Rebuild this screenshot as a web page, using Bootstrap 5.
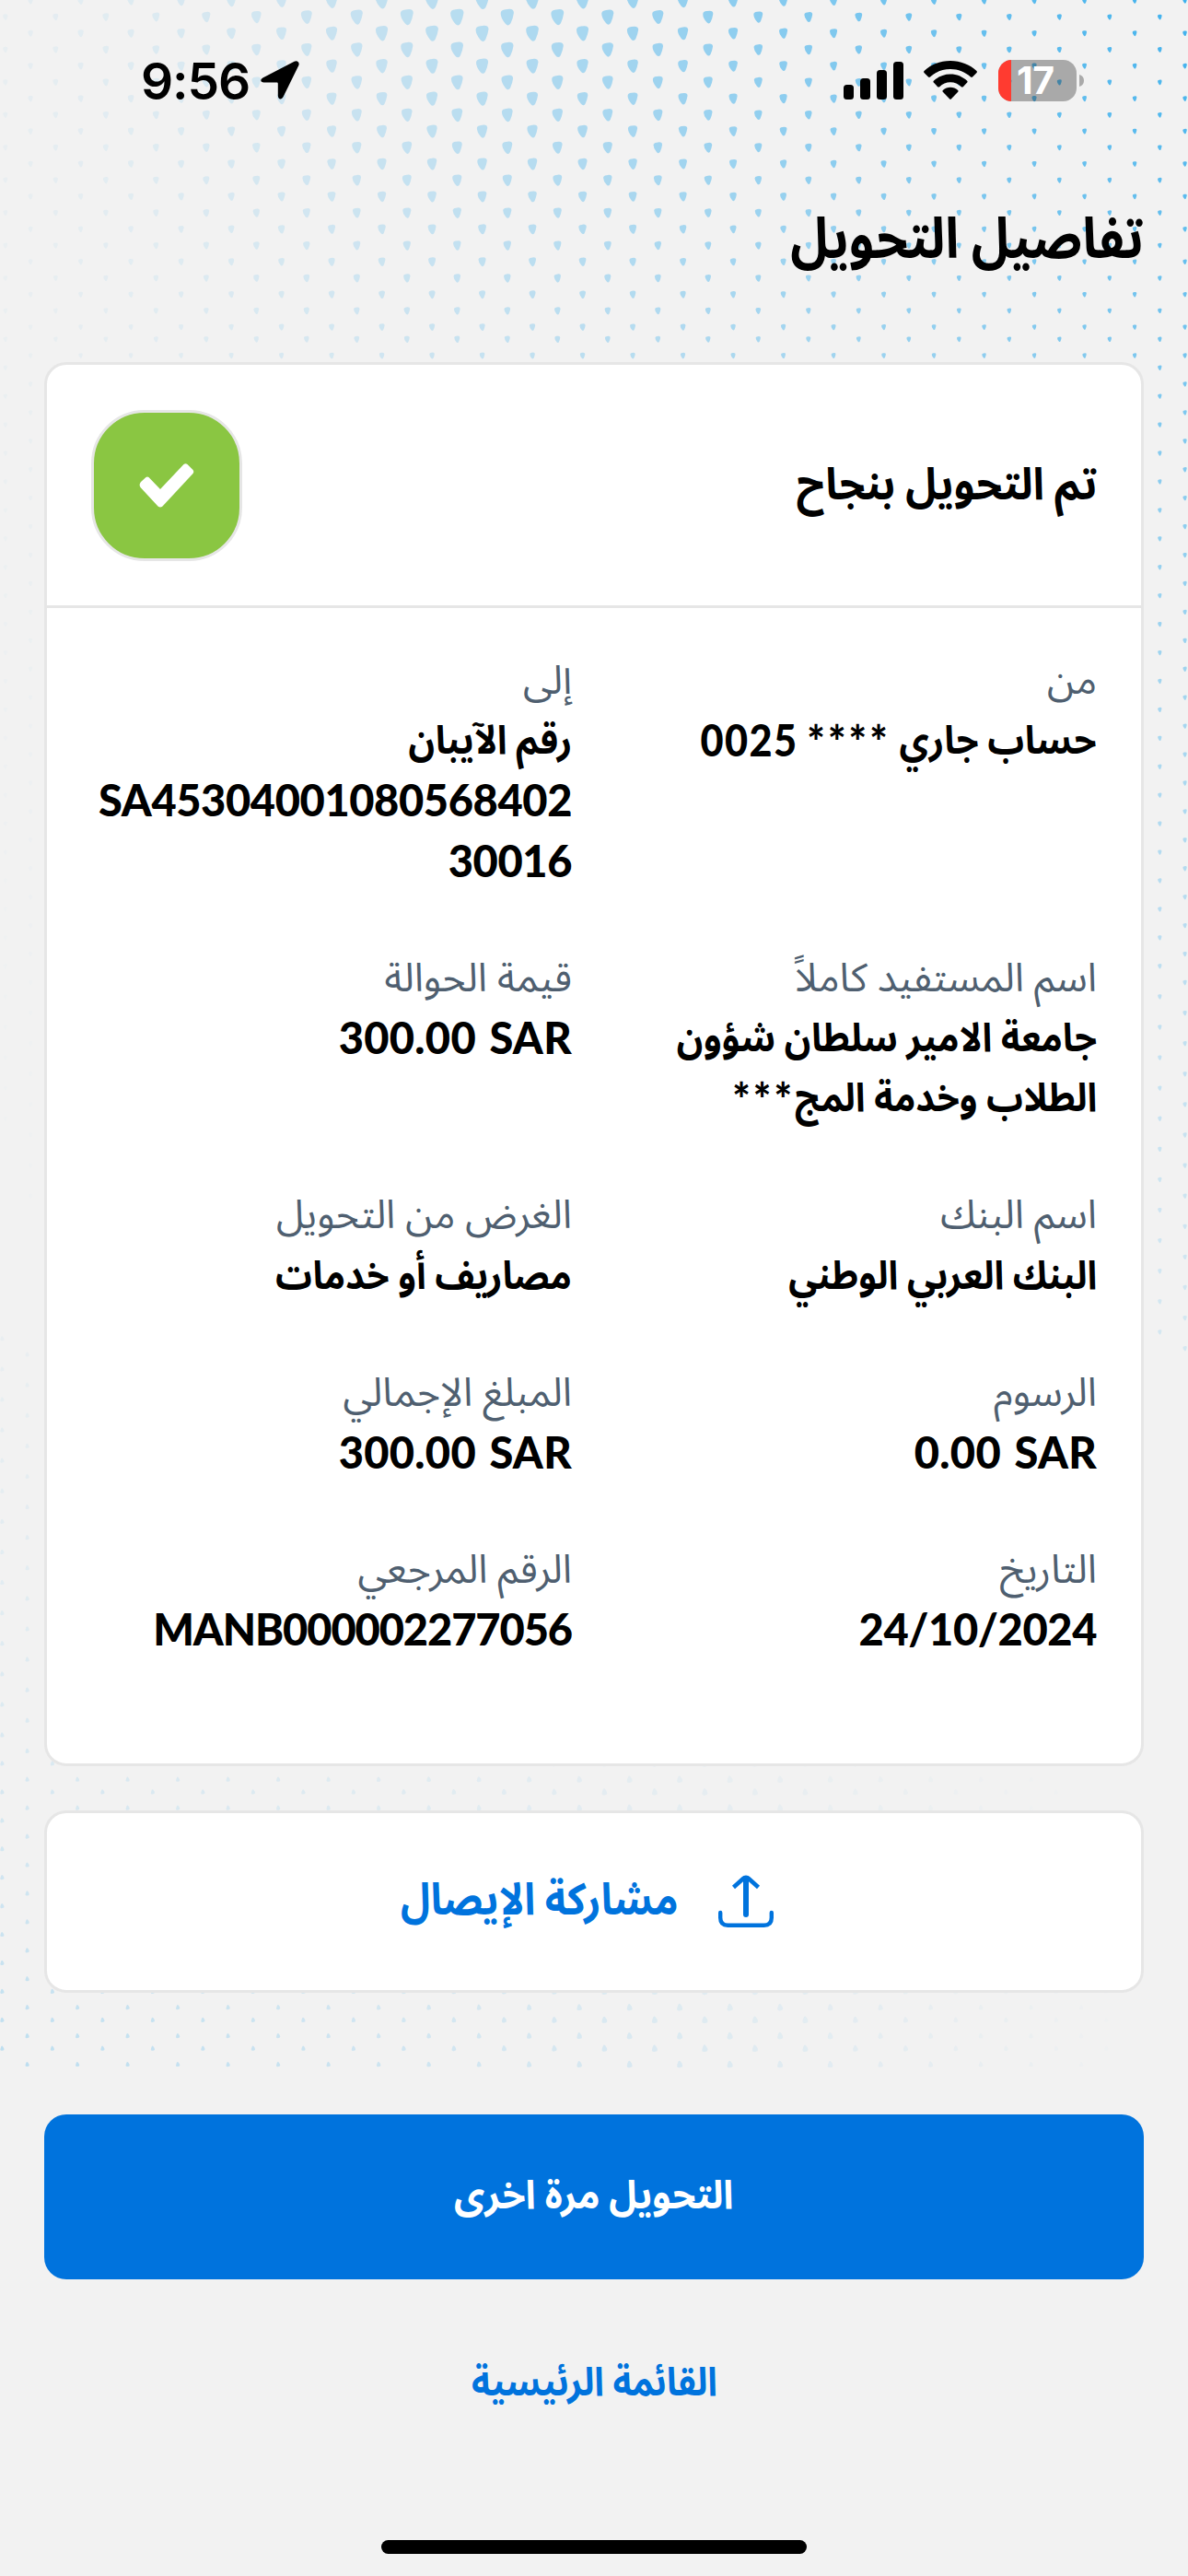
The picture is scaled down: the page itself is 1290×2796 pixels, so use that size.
<!DOCTYPE html>
<html lang="ar" dir="rtl">
<head>
<meta charset="utf-8">
<meta name="viewport" content="width=device-width, initial-scale=1">
<title>تفاصيل التحويل</title>
<link rel="stylesheet" href="https://cdn.jsdelivr.net/npm/bootstrap@5.3.0/dist/css/bootstrap.min.css">
<style>
  body{background:#f2f2f2;color:#000;font-family:Lato,"Noto Sans Arabic","DejaVu Sans Condensed","DejaVu Sans",sans-serif;}
  .screen{width:1290px;height:2796px;position:relative;overflow:hidden;z-index:0}
  .dots{position:absolute;inset:0;z-index:-1}
  .status{height:174px;padding:0 113px 0 153px}
  .clock{font:600 55px/60px Inter,sans-serif;letter-spacing:-1.1px;padding-top:2px}
  .arrow{margin-left:12px}
  .battery{width:93px;height:45px}
  .battery-num{position:absolute;left:20px;top:0;font:700 41px/45px Inter,sans-serif;color:#fff;letter-spacing:-.5px}
  .page-title{font-size:61px;line-height:90px;font-weight:700;margin:0;height:219px;padding-top:38px;transform:scaleX(.908);transform-origin:right}
  .panel{background:#fff;border:3px solid #e6e6e6;border-radius:24px}
  .panel-top{height:264px;border-bottom:3px solid #e6e6e6;padding:0 48px}
  .panel-title{font-size:48px;font-weight:700;margin:0 0 6px;transform:scaleX(.948);transform-origin:right}
  .tick{width:164px;height:164px;border:3px solid #e6e6e6;border-radius:58px;background:#8ac642}
  .panel-body{padding:44px 48px 0;height:1254px}
  .fields{--bs-gutter-x:48px;--bs-gutter-y:62px;margin-bottom:0}
  .fields dt{font-weight:400;color:#4f5f70}
  .fields dt,.fields dd{font-size:43px;line-height:65.2px;margin:0}
  .fields dd{font-weight:700;white-space:nowrap}
  .narrow{display:inline-block;transform:scaleX(.92);transform-origin:right}
  .latin{font-size:47px;line-height:1;font-weight:900;letter-spacing:-.4px;vertical-align:-3px}
  .money{letter-spacing:.3px;word-spacing:3px}
  .ref-no{letter-spacing:-1.1px}
  .acct{display:inline-block;letter-spacing:1.6px}
  .stars{display:inline-block;font-size:50px;line-height:1;letter-spacing:3.4px;font-weight:900;vertical-align:-6px}
  .share{height:198px;margin-top:48px;color:#0073dd;font-size:48px;font-weight:700;gap:43px;padding:0 43px 0 0}
  .share span{transform:scaleX(.915);transform-origin:right}
  .again{height:179px;margin-top:132px;border-radius:24px;background:#0073dd;color:#fff;font-size:43px;font-weight:700;border:0;padding-bottom:12px}
  .again span{display:inline-block;transform:scaleX(.95)}
  .home{margin-top:70px;height:80px;color:#0073dd;font-size:43px;font-weight:700;text-decoration:none}
  .home span{transform:scaleX(.905)}
  .home-bar{width:462px;height:15px;border-radius:8px;background:#000;margin-top:133px}
</style>
</head>
<body>
<div class="screen d-flex flex-column">
  <svg class="dots" id="dots" width="1290" height="2796" aria-hidden="true"><defs><path id="drop" d="M-.5-.28Q-.5-.54-.12-.58Q.5-.72.5-.32Q.44.1.26.48Q.08.76-.14.5Q-.5.08-.5-.28Z"/></defs></svg>

  <div class="status d-flex justify-content-between align-items-center" dir="ltr">
    <div class="d-flex align-items-center">
      <span class="clock">9:56</span>
      <svg class="arrow" width="42" height="42" viewBox="0 0 42 42"><path d="M36.500 .8L2.800 18.200C-1 20.300-.2 23.600 3.500 23.600H17.300C18.300 23.600 18.800 24.100 18.800 25V37.500C18.800 42 22.800 42.800 24.600 39L41.200 5.300C42.800 1.800 39.800-.9 36.500 .8Z"/></svg>
    </div>
    <div class="d-flex align-items-center">
      <svg width="65" height="41" viewBox="0 0 65 41"><rect y="25" width="11" height="16" rx="3.500"/><rect x="18" y="18" width="11" height="23" rx="3.500"/><rect x="36" y="9" width="11" height="32" rx="3.500"/><rect x="54" width="11" height="41" rx="3.500"/></svg>
      <svg style="margin-left:22px" width="58" height="42" viewBox="0 0 58 42"><path d="M29 0C40 0 50 4 57.500 11Q58.300 12 57.500 13L53 17.600Q52 18.400 51 17.600C45 12 37.500 9 29 9S13 12 7 17.600Q6 18.400 5 17.600L.5 13Q-.3 12 .5 11C8 4 18 0 29 0Z"/><path d="M29 14.500C36 14.500 42 17 47.200 21.800Q48 22.600 47.200 23.600L42.800 28.200Q41.800 29 40.800 28.200C37.500 24.800 33.500 23.200 29 23.200S20.500 24.800 17.200 28.200Q16.200 29 15.200 28.200L10.800 23.600Q10 22.600 10.800 21.800C16 17 22 14.500 29 14.500Z"/><path d="M29 28.800C32 28.800 34.700 29.800 37.200 31.900Q38 32.800 37.200 33.700L30 41.200Q29 42.200 28 41.200L20.800 33.700Q20 32.800 20.800 31.900C23.300 29.800 26 28.800 29 28.800Z"/></svg>
      <div class="battery position-relative" style="margin-left:23px">
        <svg class="d-block" width="93" height="45" viewBox="0 0 93 45"><clipPath id="bat"><rect width="85" height="45" rx="14.500"/></clipPath><g clip-path="url(#bat)"><rect width="85" height="45" fill="#000" fill-opacity=".3"/><rect width="14" height="45" fill="#ff3b30"/></g><path d="M88 16C91.500 17 93 19.500 93 22.500S91.500 28 88 29Z" fill="#aaa"/></svg>
        <span class="battery-num">17</span>
      </div>
    </div>
  </div>

  <main class="d-flex flex-column px-5">
    <h1 class="page-title">تفاصيل التحويل</h1>

    <section class="panel">
      <div class="panel-top d-flex justify-content-between align-items-center">
        <h2 class="panel-title">تم التحويل بنجاح</h2>
        <div class="tick d-flex align-items-center justify-content-center">
          <svg width="60" height="48" viewBox="0 0 60 48"><path d="M2 20L7.500 15Q9 14 10.500 15L23 28L48.500 1Q50.500-.5 52.500 1L58.500 7Q60 9 58.500 11L25.500 46.500Q23 48.500 20.500 46.500L1.500 26Q-.5 23 2 20Z" fill="#fff"/></svg>
        </div>
      </div>
      <div class="panel-body">
        <dl class="row fields">
          <div class="col-6"><dt>من</dt><dd><span class="narrow">حساب جاري <span class="stars" dir="ltr">****</span> <span class="latin acct" dir="ltr">0025</span></span></dd></div>
          <div class="col-6"><dt>إلى</dt><dd><span class="narrow">رقم الآيبان</span><br><span class="latin">SA45304001080568402<br>30016</span></dd></div>
          <div class="col-6"><dt>اسم المستفيد كاملاً</dt><dd><span class="narrow">جامعة الامير سلطان شؤون<br>الطلاب وخدمة المج<span class="stars" dir="ltr">***</span></span></dd></div>
          <div class="col-6"><dt>قيمة الحوالة</dt><dd><bdi class="latin money" dir="ltr">300.00 SAR</bdi></dd></div>
          <div class="col-6"><dt>اسم البنك</dt><dd><span class="narrow">البنك العربي الوطني</span></dd></div>
          <div class="col-6"><dt>الغرض من التحويل</dt><dd><span class="narrow">مصاريف أو خدمات</span></dd></div>
          <div class="col-6"><dt>الرسوم</dt><dd><bdi class="latin money" dir="ltr">0.00 SAR</bdi></dd></div>
          <div class="col-6"><dt>المبلغ الإجمالي</dt><dd><bdi class="latin money" dir="ltr">300.00 SAR</bdi></dd></div>
          <div class="col-6"><dt>التاريخ</dt><dd><bdi class="latin" dir="ltr">24/10/2024</bdi></dd></div>
          <div class="col-6"><dt>الرقم المرجعي</dt><dd><bdi class="latin ref-no" dir="ltr">MANB000002277056</bdi></dd></div>
        </dl>
      </div>
    </section>

    <button class="panel share d-flex align-items-center justify-content-center" type="button">
      <svg width="60" height="58" viewBox="0 0 60 58" fill="none" stroke="#0073dd"><path d="M2.200 41V46.500Q2.200 54.700 10.400 54.700H49.600Q57.800 54.700 57.800 46.500V41" stroke-width="4.400" stroke-linecap="round"/><path d="M30 4V43" stroke-width="6" stroke-linecap="round"/><path d="M16.500 13.500L26.500 4.500Q30 1 33.500 4.500L43.500 13.500" stroke-width="4.600"/></svg>
      <span class="pb-2">مشاركة الإيصال</span>
    </button>

    <button class="btn again" type="button"><span>التحويل مرة اخرى</span></button>
    <a class="home d-flex align-items-center justify-content-center" href="#"><span>القائمة الرئيسية</span></a>
  </main>
  <div class="home-bar align-self-center"></div>
</div>
<script>
  // Halftone background: one field fades from the top right corner, one from the bottom left.
  const svg = document.getElementById('dots');
  function drop(x, y, w, alpha, up) {
    if (alpha < 0.012) return;
    const u = document.createElementNS('http://www.w3.org/2000/svg', 'use');
    u.setAttribute('href', '#drop');
    u.setAttribute('transform', `translate(${x} ${y}) scale(${up ? -w : w})`);
    u.setAttribute('fill', '#2aa9ec');
    u.setAttribute('fill-opacity', alpha.toFixed(3));
    svg.appendChild(u);
  }
  function rows(start, parts) {
    const out = [start];
    for (const [end, step] of parts) while (out[out.length - 1] + step <= end + 3) out.push(out[out.length - 1] + step);
    return out;
  }
  const topRows = [rows(18.5, [[337.3, 35.43], [1048.5, 30.93], [1445.7, 33.1]]), rows(.8, [[355.2, 35.43], [1066.3, 30.93], [1462, 33.1]])];
  for (let c = 0; c < 48; c++) {
    const x = 5.8 + 27.25 * c, d = x - 510;
    const bump = Math.exp(-d * d / (2 * (d < 0 ? 240 : 290) ** 2));
    for (const y of topRows[c % 2]) {
      const w = 4.3 + 10.5 * bump * Math.max(0, 1 - y / 440);
      drop(x, y, w, (.05 + .85 * (x / 1290) ** 1.3) * Math.exp(-((y / 900) ** 1.2)), false);
    }
  }
  const lowRows = [rows(1452.7, [[1883, 33.1], [2223, 30.93]]), rows(1470, [[1900.7, 33.1], [2241, 30.93]])];
  for (let c = 0; c < 48; c++) {
    const x = 2.4 + 27.25 * c;
    for (const y of lowRows[c % 2])
      drop(x, y, 4.2 + 2 * Math.exp(-(((x - 780) / 250) ** 2)), .27 * (1 - x / 1270) * Math.exp(-(2240 - y) / 430), true);
  }
</script>
<script src="https://cdn.jsdelivr.net/npm/bootstrap@5.3.0/dist/js/bootstrap.bundle.min.js"></script>
</body>
</html>
